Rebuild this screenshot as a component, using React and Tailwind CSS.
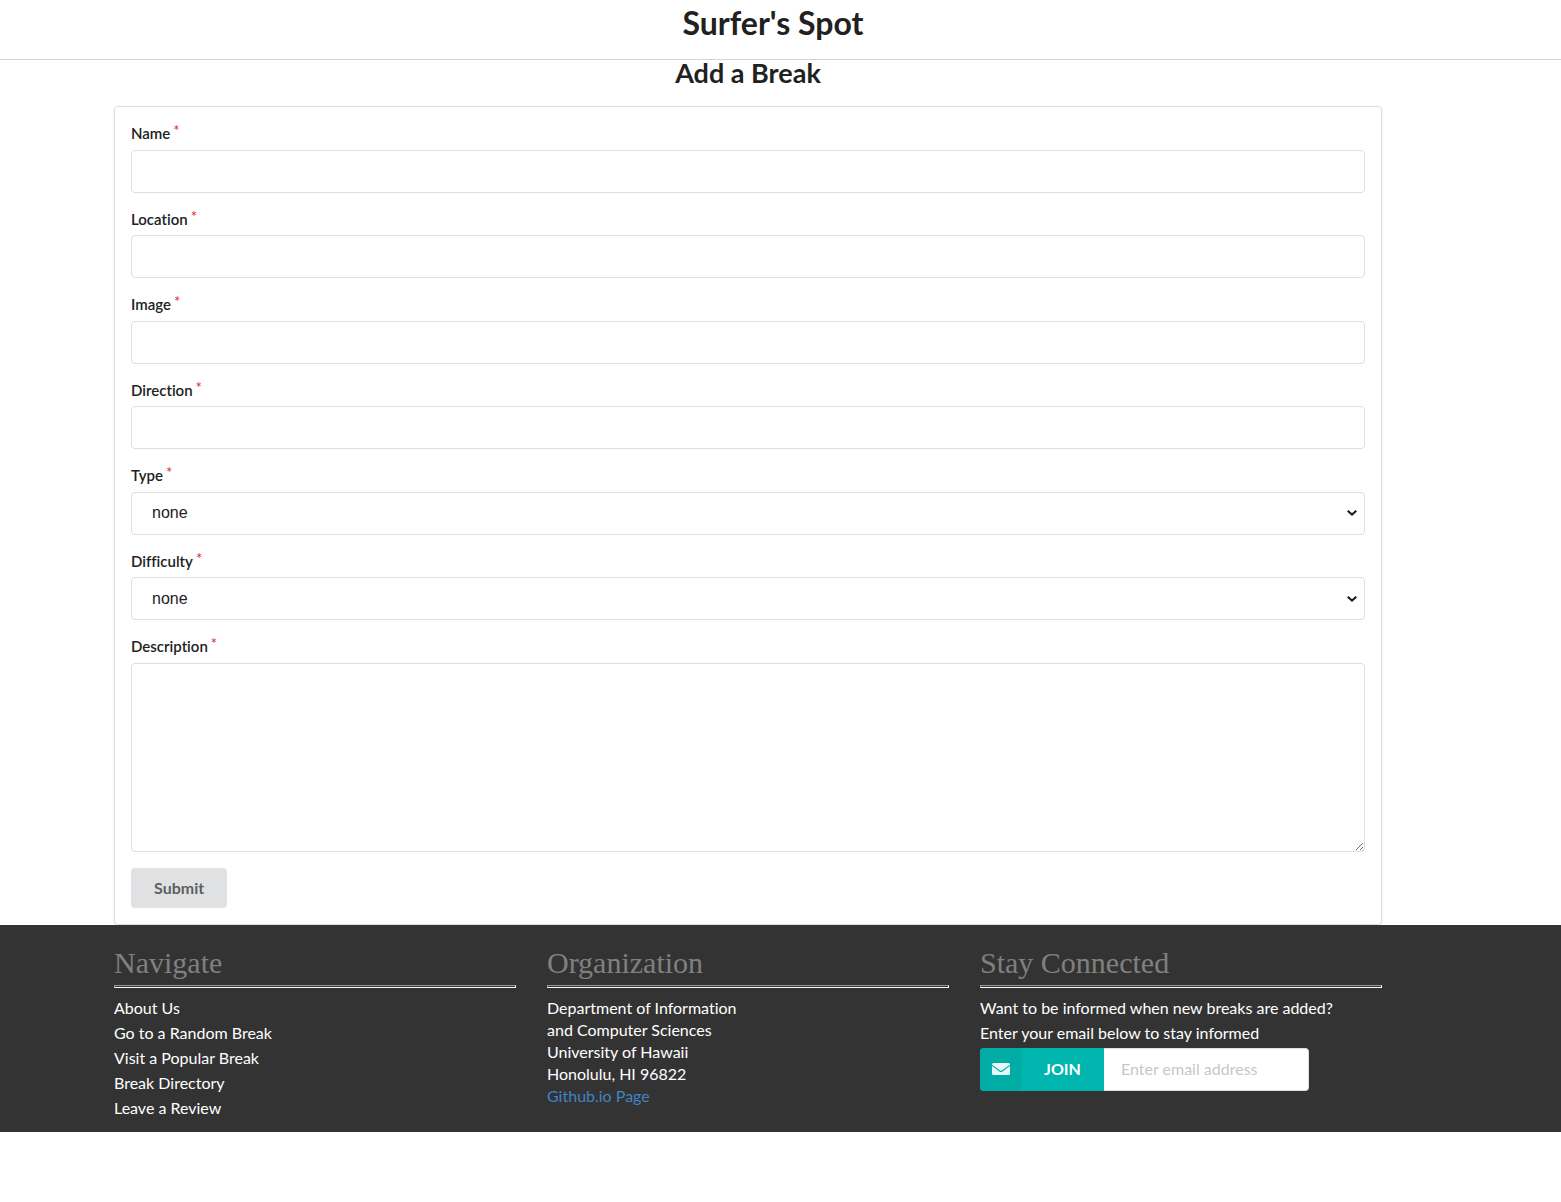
import React from "react";

const textFields = ["Name", "Location", "Image", "Direction"];
const selectFields = [
  { label: "Type", options: ["none", "Reef", "Point", "Beach"] },
  { label: "Difficulty", options: ["none", "Beginner", "Intermediate", "Expert"] },
];
const links = [
  "About Us",
  "Go to a Random Break",
  "Visit a Popular Break",
  "Break Directory",
  "Leave a Review",
];

function FieldLabel({ id, children }) {
  return (
    <label htmlFor={id} className="mb-[5px] block text-[15px] leading-normal font-semibold text-[#212121]">
      {children}
      <sup className="top-[-3px] ml-[3px] text-[15px] leading-none font-normal text-[#db2828]">*</sup>
    </label>
  );
}

function Chevron() {
  return (
    <svg
      className="pointer-events-none absolute top-1/2 right-2 h-[6px] w-[10px] -translate-y-1/2"
      viewBox="0 0 10 6"
      fill="none"
      stroke="#1b1c1d"
      strokeWidth="2"
      aria-hidden="true"
    >
      <path d="M0.7 0.8 5 4.6 9.3 0.8" />
    </svg>
  );
}

function FooterColumn({ title, children }) {
  return (
    <section>
      <h3 className="text-[30px] leading-9 text-[#808080] [font-family:'Liberation_Serif',serif]">{title}</h3>
      <hr className="mt-1 h-[3px] border border-t-[#9a9a9a] border-r-white border-b-white border-l-[#9a9a9a]" />
      {children}
    </section>
  );
}

export default function App() {
  return (
    <div className="bg-white text-base text-[#212121] [font-family:Lato,sans-serif] [font-variant-ligatures:none]">
      <header className="h-[60px] border-b border-[#d4d4d5] pt-[3px] pr-[15px]">
        <h1 className="text-center text-[32px] leading-10 font-bold">Surfer's Spot</h1>
      </header>

      <main className="pr-[179px] pl-[114px]">
        <h2 className="mb-5 text-center text-[27px] leading-[26px] font-bold">Add a Break</h2>
        <form
          className="rounded border border-[#dededf] px-4 pt-[15px] pb-4 shadow-[0_1px_2px_0_rgba(34,36,38,0.15)]"
          onSubmit={(e) => e.preventDefault()}
        >
          {textFields.map((name) => (
            <div key={name} className="mb-[15px]">
              <FieldLabel id={name}>{name}</FieldLabel>
              <input
                id={name}
                type="text"
                className="block h-[43px] w-full rounded border border-[#dededf] px-4 outline-none focus:border-[#85b7d9]"
              />
            </div>
          ))}
          {selectFields.map(({ label, options }) => (
            <div key={label} className="mb-[15px]">
              <FieldLabel id={label}>{label}</FieldLabel>
              <div className="relative">
                <select
                  id={label}
                  className="block h-[43px] w-full appearance-none rounded border border-[#dededf] bg-white px-5 text-base text-[#212121] outline-none [font-family:'Liberation_Sans',sans-serif]"
                >
                  {options.map((o) => (
                    <option key={o}>{o}</option>
                  ))}
                </select>
                <Chevron />
              </div>
            </div>
          ))}
          <div className="mb-4">
            <FieldLabel id="Description">Description</FieldLabel>
            <textarea
              id="Description"
              className="block h-[189px] w-full resize-y rounded border border-[#dededf] px-4 py-3 outline-none focus:border-[#85b7d9]"
            />
          </div>
          <button
            type="submit"
            className="block h-10 rounded bg-[#e0e1e2] px-[23px] font-bold text-[#5f6061] hover:bg-[#cacbcd]"
          >
            Submit
          </button>
        </form>
      </main>

      <footer className="grid grid-cols-3 gap-[31px] bg-[#333333] pt-5 pr-[179px] pb-3 pl-[114px] text-white">
        <FooterColumn title="Navigate">
          <ul className="mt-[7px]">
            {links.map((l) => (
              <li key={l} className="leading-[25px]">
                <a href="#">{l}</a>
              </li>
            ))}
          </ul>
        </FooterColumn>
        <FooterColumn title="Organization">
          <address className="mt-[9px] leading-[22px] not-italic">
            Department of Information
            <br />
            and Computer Sciences
            <br />
            University of Hawaii
            <br />
            Honolulu, HI 96822
            <br />
            <a href="#" className="text-[#4183c4]">
              Github.io Page
            </a>
          </address>
        </FooterColumn>
        <FooterColumn title="Stay Connected">
          <p className="mt-[7px] leading-[25px]">
            Want to be informed when new breaks are added?
            <br />
            <label htmlFor="email">Enter your email below to stay informed</label>
          </p>
          <form className="mt-[3px] flex h-[43px]" onSubmit={(e) => e.preventDefault()}>
            <button type="submit" className="flex items-stretch overflow-hidden rounded-l bg-[#00b5ad] font-bold">
              <span className="flex w-[41px] items-center justify-center bg-[#00aca4]">
                <svg className="h-3 w-[18px]" viewBox="0 0 18 12" fill="#e5f7f6" aria-hidden="true">
                  <path d="M1.5 0h15A1.5 1.5 0 0 1 18 1.5v.3L9.9 7.6q-.9.6-1.8 0L0 1.8v-.3A1.5 1.5 0 0 1 1.5 0Z" />
                  <path d="M0 3 7.5 8.400q1.5 1 3 0L18 3v7.5a1.5 1.5 0 0 1-1.5 1.5h-15A1.5 1.5 0 0 1 0 10.5Z" />
                </svg>
              </span>
              <span className="flex w-[83px] items-center justify-center">JOIN</span>
            </button>
            <input
              id="email"
              type="email"
              placeholder="Enter email address"
              className="w-[205px] rounded-r border border-l-0 border-[#dededf] bg-white px-[17px] text-[#212121] outline-none placeholder:text-[#c7c7c8]"
            />
          </form>
        </FooterColumn>
      </footer>
    </div>
  );
}
